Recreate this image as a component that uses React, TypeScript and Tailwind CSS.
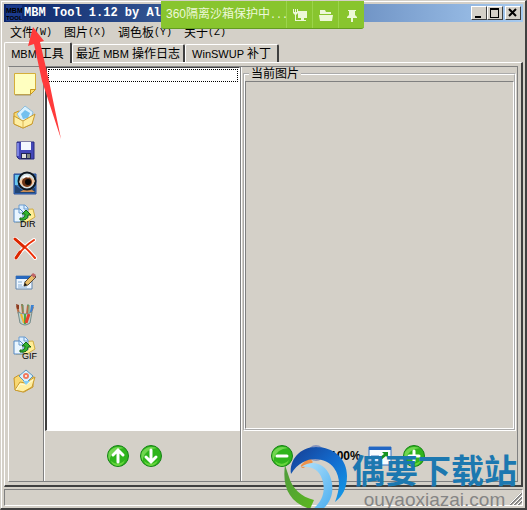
import type { ReactNode } from "react";

type IconProps = { className?: string };

const RAISED = "border border-t-white border-l-white border-r-[#404040] border-b-[#404040]";
const SUNKEN = "border border-t-[#808080] border-l-[#808080] border-r-white border-b-white";

function Latin({ children }: { children: ReactNode }) {
  return <span className="text-[11px]">{children}</span>;
}

function NewIcon() {
  return (
    <svg viewBox="0 0 24 24" className="size-6">
      <path d="M1.5 1.5h21v16l-5 5h-16z" fill="#ffffc0" stroke="#d5ae39" />
      <path d="M17.500 22.500v-5h5z" fill="#ffe36a" stroke="#c89920" />
      <path d="M2 23h16" stroke="#a49566" />
    </svg>
  );
}

function Folder() {
  return (
    <>
      <path d="M1 9l5-3 5 2 9-1v11l-9 5-9-2z" fill="#f8d873" stroke="#c79626" />
      <path d="M2 21l5-8 5 1 10-6-3 10-9 5z" fill="#ffefa2" stroke="#c99b30" />
      <path d="M3 21l4-6 6 1 7-5" fill="none" stroke="#fffbd8" />
    </>
  );
}

function OpenIcon() {
  return (
    <svg viewBox="0 0 24 24" className="size-6">
      <path d="M1 8l5-2 5 3 8-1v11l-9 4-9-4z" fill="#f8d873" stroke="#c79626" />
      <path d="M4 9l8-8 8 6-2 8-9 2z" fill="#d8f1ff" stroke="#8fbfdc" />
      <path d="M8 9l4-4 5 3-2 5-5 1z" fill="#73c0ee" />
      <path d="M1 11l9 5 12-7-3 10-9 4-9-4z" fill="#ffefa2" stroke="#c99b30" />
      <path d="M10 16v6" stroke="#dcb451" />
    </svg>
  );
}

function SaveIcon() {
  return (
    <svg viewBox="0 0 24 24" className="size-6">
      <path d="M4 4h17v17H6l-2-2z" fill="#4448b8" stroke="#292b80" />
      <path d="M8 4h10v8H8z" fill="#f3f7ff" />
      <path d="M4 5h2v13H4z" fill="#7b83e3" />
      <path d="M8 15h10v6H8z" fill="#222653" />
      <path d="M9 16h4v4H9z" fill="#dedfd8" />
      <path d="M14 16h3v4h-3z" fill="#838a80" />
    </svg>
  );
}

function ViewIcon() {
  return (
    <svg viewBox="0 0 24 24" className="size-6">
      <path d="M1 3h22v20H1z" fill="#3974b8" stroke="#284d9a" />
      <path d="M2 4h9v10H2z" fill="#67c6ef" />
      <path d="M2 14l7 5 13-2v5H2z" fill="#224473" />
      <path d="M7 21l8-5 7 5z" fill="#c98d55" />
      <circle cx="14" cy="10" r="8.500" fill="#d3e3e8" stroke="#101820" strokeWidth="2" />
      <path d="M6 11q8-11 16-1-7 12-16 1z" fill="#f2c69d" />
      <circle cx="14" cy="11" r="5" fill="#6c3516" />
      <circle cx="15" cy="11" r="3" fill="#070707" />
      <path d="M10 7q3-3 6-1" stroke="#fff" strokeWidth="2" fill="none" />
    </svg>
  );
}

function ConvertIcon({ label }: { label: string }) {
  return (
    <svg viewBox="0 0 24 24" className="size-6 overflow-visible">
      <path d="M4 6l16-1 2 8-8 5H3z" fill="#ffed97" stroke="#d0ad42" />
      <path d="M6 1h6l3 3v10H6z" fill="#dceeff" stroke="#6a9cd0" />
      <path d="M1 5h6l3 3v10H1z" fill="#eaf6ff" stroke="#5689c3" />
      <path d="M11 1v4h4M6 5v4h4" stroke="#6a9cd0" fill="none" />
      <path d="M7 14q5 1 5-4H9l4-4 5 5h-3q0 6-8 5z" fill="#31b531" stroke="#146514" />
      <text x={label === "DIR" ? 7 : 9} y="23" className="fill-black font-['Liberation_Sans'] text-[9px]">
        {label}
      </text>
    </svg>
  );
}

function DeleteIcon() {
  return (
    <svg viewBox="0 0 24 24" className="size-6" strokeLinecap="round">
      <path d="M2 2q10 7 20 19M21 3Q10 10 3 21" stroke="#fff" strokeWidth="4" fill="none" />
      <path d="M2 2q10 7 20 19M21 3Q10 10 3 21" stroke="#ec3008" strokeWidth="2" fill="none" />
      <path d="M2 2l9 8M7 15l-4 6" stroke="#dc2700" strokeWidth="3" />
    </svg>
  );
}

function EditIcon() {
  return (
    <svg viewBox="0 0 24 24" className="size-6">
      <path d="M3 6h16v13H3z" fill="#edf6ff" stroke="#6085ae" />
      <path d="M3 6h16v3H3z" fill="#2868bd" />
      <path d="M5 12h4M5 15h4M11 12h4M5 17h9" stroke="#87add5" />
      <path d="M11 16l1-4 8-8 3 3-8 8z" fill="#e8bd6a" stroke="#5c4b35" />
      <path d="M18 5l2-2 3 2-2 3z" fill="#bf6668" />
      <path d="M11 16l1-3 2 2z" fill="#111" />
    </svg>
  );
}

function BrushesIcon() {
  return (
    <svg viewBox="0 0 24 24" className="size-6">
      <path d="M6 11L4 3M10 11L9 1M14 11l1-9M17 12l3-8" stroke="#b96c45" strokeWidth="2" />
      <path d="M3 1l3 1v4H4z" fill="#8c3b20" />
      <path d="M8 2h2v7M14 2h2v8" stroke="#5c9c6b" fill="none" />
      <path d="M18 2h3l-2 7h-2z" fill="#3c82d1" />
      <path d="M5 9q7 4 14 0l-2 11q-5 4-10 0z" fill="#b9d3cf" stroke="#758c8b" />
      <path d="M8 11l3 9" stroke="#f3b72c" strokeWidth="2" />
      <path d="M12 11v10" stroke="#50a841" strokeWidth="2" />
      <path d="M16 11l-3 9" stroke="#e5422e" strokeWidth="3" />
    </svg>
  );
}

function PictureFolderIcon() {
  return (
    <svg viewBox="0 0 24 24" className="size-6">
      <Folder />
      <path d="M13 1l7 6-7 7-7-7z" fill="#d6f2ff" stroke="#6096bf" />
      <circle cx="13" cy="7" r="3" fill="#f2795e" />
      <circle cx="13" cy="7" r="1" fill="#fff" />
      <path d="M10 12h7l-4 4z" fill="#83cdf5" />
    </svg>
  );
}

function RoundIcon({ path }: { path: string }) {
  return (
    <svg viewBox="0 0 24 24" className="size-6">
      <circle cx="12" cy="12" r="10.500" fill="#2fb51c" stroke="#168316" />
      <path d="M4 14Q7 5 18 4 8 1 3 8q-2 5 1 9z" fill="#71d650" />
      <path d="M5 17q7 6 14-1-2 6-8 6-5-1-6-5z" fill="#67d53d" />
      <path d={path} stroke="#fff" strokeWidth="3" fill="none" strokeLinecap="round" />
    </svg>
  );
}

function MagnifierIcon() {
  return (
    <svg viewBox="0 0 24 24" className="size-6">
      <path d="M10 15l-7 7" stroke="#ef934b" strokeWidth="4" strokeLinecap="round" />
      <circle cx="16" cy="9" r="7" fill="#e6f3ff" stroke="#8795bd" strokeWidth="2" />
    </svg>
  );
}

function FitIcon() {
  return (
    <svg viewBox="0 0 24 24" className="size-6">
      <path d="M1 3h22v18H1z" fill="#f8fcff" stroke="#3273c5" />
      <path d="M1 3h22v3H1z" fill="#2266c4" />
      <path d="M3 12h8v7H3z" fill="#d8eaff" stroke="#4c83c4" />
      <path d="M11 14l5-4-2-2h6v6l-2-2-5 4z" fill="#149321" />
    </svg>
  );
}

function AppIcon({ className }: IconProps) {
  return (
    <svg viewBox="0 0 16 16" className={className}>
      <path d="M0 0h16v16H0z" fill="#1b3a8a" />
      <text x="0" y="8" className="fill-black font-['Liberation_Sans'] text-[7px] font-bold">MBM</text>
      <text x="0" y="15" className="fill-black font-['Liberation_Sans'] text-[6px] font-bold">TOOL</text>
    </svg>
  );
}

function SiteLogo({ className }: IconProps) {
  return (
    <svg viewBox="0 0 64 64" className={className}>
      <defs>
        <linearGradient id="ring" x1="0" y1="0" x2="1" y2="1">
          <stop offset="0" stopColor="#163d91" />
          <stop offset=".5" stopColor="#136bce" />
          <stop offset="1" stopColor="#149fea" />
        </linearGradient>
        <linearGradient id="leaf" x1="0" y1="0" x2="1" y2="1">
          <stop offset="0" stopColor="#4f9a3c" />
          <stop offset="1" stopColor="#5cb81f" />
        </linearGradient>
        <linearGradient id="wave" x1="0" y1="0" x2="1" y2="1">
          <stop offset="0" stopColor="#b4e2fb" />
          <stop offset="1" stopColor="#4aaef0" />
        </linearGradient>
      </defs>
      <path d="M17 20l9-7 3 3-6 5z" fill="#ef934b" />
      <path d="M7 28C5 14 16 1 32 1c18 0 31 12 31 29 0 11-4 20-12 26 5-13 6-24-1-34C42 11 20 7 7 28z" fill="url(#ring)" />
      <path d="M1 19c-3 22 4 37 25 44l4-9C17 51 8 42 5 31z" fill="url(#leaf)" />
      <path d="M17 21c12-8 24-3 29 9 5 13 2 25-7 33h-10c10-8 13-19 9-30-3-9-10-13-21-12z" fill="url(#wave)" />
    </svg>
  );
}

const TOOLS = [
  { name: "新建", icon: <NewIcon /> },
  { name: "打开", icon: <OpenIcon /> },
  { name: "保存", icon: <SaveIcon /> },
  { name: "查看", icon: <ViewIcon /> },
  { name: "导出目录", icon: <ConvertIcon label="DIR" /> },
  { name: "删除", icon: <DeleteIcon /> },
  { name: "编辑", icon: <EditIcon /> },
  { name: "画笔", icon: <BrushesIcon /> },
  { name: "导出动画", icon: <ConvertIcon label="GIF" /> },
  { name: "图片文件夹", icon: <PictureFolderIcon /> },
];

const MENUS = [
  { label: "文件", hotkey: "(W)" },
  { label: "图片", hotkey: "(X)" },
  { label: "调色板", hotkey: "(Y)" },
  { label: "关于", hotkey: "(Z)" },
];

function SandboxBar() {
  return (
    <div className="absolute top-0 left-40 flex h-7 items-center rounded-b-[3px] border-b border-[#639c20] bg-[#88c52e] text-[#edf8d8]">
      <span className="w-[125px] pl-[5px] text-xs whitespace-nowrap">
        360隔离沙箱保护中<span className="font-['Liberation_Mono'] text-[10px]">...</span>
      </span>
      <button aria-label="沙箱" className="flex h-full w-[26px] items-center justify-center border-l border-[#9bd44b]">
        <svg viewBox="0 0 14 14" className="size-3.5" fill="currentColor">
          <path d="M0 1h1v3h1V1h1v3h1V1h1v4L3 7v5h3v1H2V7L0 5z" />
          <path d="M5 3h9v7h-3v2h2v1H6v-1h2v-2H5z" />
        </svg>
      </button>
      <button aria-label="文件夹" className="flex h-full w-[26px] items-center justify-center border-l border-[#9bd44b]">
        <svg viewBox="0 0 14 14" className="size-3.5" fill="currentColor">
          <path d="M1 2h5l1 2h5v2H1zM0 7h14l-1 6H1z" />
        </svg>
      </button>
      <button aria-label="固定" className="flex h-full w-[26px] items-center justify-center border-l border-[#9bd44b]">
        <svg viewBox="0 0 14 14" className="size-3.5" fill="currentColor">
          <path d="M3 2h8v1h-1v4l2 2v1H8v4H6v-4H2V9l2-2V3H3z" />
        </svg>
      </button>
    </div>
  );
}

function TitleBar() {
  const button = `flex h-3.5 w-4 items-center justify-center bg-[#d4d0c8] ${RAISED}`;
  return (
    <header className="flex h-[18px] shrink-0 items-center bg-linear-to-r from-[#0a246a] to-[#a6caf0] px-0.5">
      <AppIcon className="size-4" />
      <h1 className="ml-0.5 flex-1 truncate font-['Liberation_Mono'] text-xs font-bold text-white">
        MBM Tool 1.12 by Ale
      </h1>
      <button aria-label="最小化" className={button}>
        <svg viewBox="0 0 12 12" className="size-3"><path d="M2 9h6v2H2z" /></svg>
      </button>
      <button aria-label="最大化" className={button}>
        <svg viewBox="0 0 12 12" className="size-3"><path d="M1 1h9v10H1zM2 3v7h7V3z" fillRule="evenodd" /></svg>
      </button>
      <button aria-label="关闭" className={`ml-0.5 ${button}`}>
        <svg viewBox="0 0 12 12" className="size-3"><path d="M2 2l7 7M9 2L2 9" stroke="#000" strokeWidth="2" /></svg>
      </button>
    </header>
  );
}

function Tabs() {
  const tab = "rounded-t-xs border-t border-l border-r-2 border-t-white border-l-white border-r-[#404040] pt-px whitespace-nowrap";
  return (
    <div role="tablist" className="flex h-5 shrink-0 items-end">
      <button role="tab" aria-selected="true" className={`relative -mb-px h-[21px] w-[68px] bg-[#d4d0c8] ${tab}`}>
        <Latin>MBM </Latin>工具
      </button>
      <button role="tab" aria-selected="false" className={`h-[18px] w-[113px] ${tab}`}>
        最近<Latin> MBM </Latin>操作日志
      </button>
      <button role="tab" aria-selected="false" className={`h-[18px] w-[94px] ${tab}`}>
        <Latin>WinSWUP </Latin>补丁
      </button>
    </div>
  );
}

function Watermark() {
  return (
    <div className="pointer-events-none absolute right-2 -bottom-0.5 flex items-end">
      <SiteLogo className="size-16" />
      <div className="ml-1 flex flex-col items-center">
        <span className="text-[33px] leading-9 font-bold text-[#1c78b0]">偶要下载站</span>
        <span className="font-['Liberation_Sans'] text-[19px] leading-5 text-[#858585]">ouyaoxiazai.com</span>
      </div>
    </div>
  );
}

export default function App() {
  return (
    <div className="relative flex h-screen flex-col overflow-hidden border-t border-l border-r-2 border-b-2 border-t-[#d4d0c8] border-l-[#d4d0c8] border-r-[#404040] border-b-[#404040] bg-[#d4d0c8] font-['Liberation_Sans','Noto_Sans_CJK_SC',sans-serif] text-xs text-black">
      <div className="flex min-h-0 flex-1 flex-col border-t border-l border-white p-0.5">
        <TitleBar />
        <nav className="flex h-5 shrink-0 items-center gap-3 px-1.5 pt-0.5">
          {MENUS.map((menu) => (
            <button key={menu.label} className="flex items-center">
              {menu.label}
              <span className="font-['Liberation_Mono'] text-[10px]">{menu.hotkey}</span>
            </button>
          ))}
        </nav>
        <Tabs />
        <main className="flex min-h-0 flex-1 flex-col border-t border-l border-r-2 border-b-2 border-t-white border-l-white border-r-[#404040] border-b-[#404040] p-[3px]">
          <div className="flex min-h-0 flex-1 border border-[#808080] border-l-white">
            <aside className="flex w-[35px] shrink-0 flex-col items-start gap-[9px] border-r border-[#808080] pt-[5px] pl-1">
              {TOOLS.map((tool) => (
                <button key={tool.name} aria-label={tool.name}>{tool.icon}</button>
              ))}
            </aside>
            <section className="flex w-[197px] shrink-0 flex-col border-r border-l border-r-[#808080] border-l-white">
              <div
                role="listbox"
                aria-label="图片列表"
                className="min-h-0 flex-1 border-t border-r border-b border-l-2 border-t-[#404040] border-r-white border-b-white border-l-[#404040] bg-white p-px"
              >
                <div role="option" aria-selected="false" className="h-[13px] border border-dotted border-black" />
              </div>
              <div className="flex h-[50px] shrink-0 items-center justify-center gap-[9px] pr-[17px]">
                <button aria-label="上移"><RoundIcon path="M12 18V7M7 11l5-5 5 5" /></button>
                <button aria-label="下移"><RoundIcon path="M12 6v11M7 13l5 5 5-5" /></button>
              </div>
            </section>
            <section className="flex min-w-0 flex-1 flex-col border-l border-white">
              <fieldset className="mx-px flex min-h-0 flex-1 flex-col border-2 border-white [border-style:groove]">
                <legend className="ml-1 h-3.5 px-0.5 leading-3.5">当前图片</legend>
                <div className={`min-h-0 flex-1 ${SUNKEN}`} />
              </fieldset>
              <div className="flex h-[50px] shrink-0 items-center pl-7">
                <button aria-label="缩小"><RoundIcon path="M7 12h10" /></button>
                <button aria-label="缩放" className="ml-1.5"><MagnifierIcon /></button>
                <span className="ml-1.5 w-[38px] font-bold">100%</span>
                <button aria-label="适合窗口"><FitIcon /></button>
                <button aria-label="放大" className="ml-2.5"><RoundIcon path="M7 12h10M12 7v10" /></button>
              </div>
            </section>
          </div>
        </main>
        <footer className={`mt-0.5 flex h-[17px] shrink-0 items-end justify-end ${SUNKEN}`}>
          <svg viewBox="0 0 12 12" className="size-3">
            <path d="M0 12L12 0M4 12l8-8M8 12l4-4" stroke="#808080" strokeWidth="2" />
            <path d="M-1 12L11 0M3 12l9-9M7 12l5-5" stroke="#fff" />
          </svg>
        </footer>
      </div>
      <SandboxBar />
      <svg viewBox="0 0 36 112" className="pointer-events-none absolute top-[26px] left-[26px] h-28 w-9">
        <path d="M6 0L1 19l6-2 8 37 19 58-12-58-9-39 4-1z" fill="#ff3b3b" />
      </svg>
      <Watermark />
    </div>
  );
}
